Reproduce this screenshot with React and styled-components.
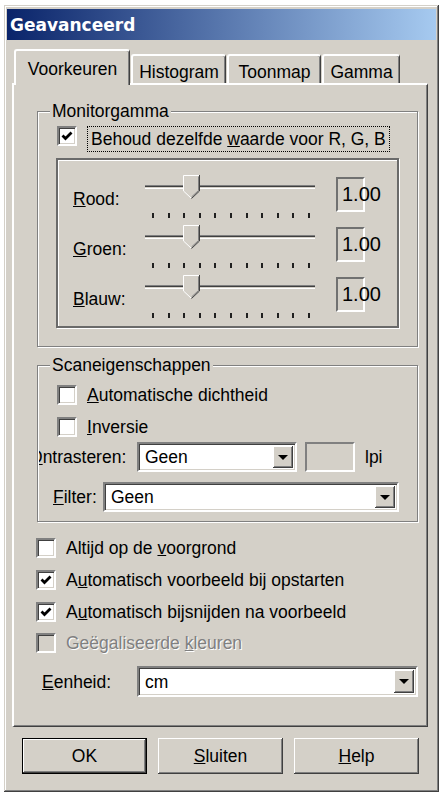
import React from 'react'
import styled, { createGlobalStyle } from 'styled-components'

const GlobalStyle = createGlobalStyle`
  html, body {
    margin: 0;
    padding: 0;
    background: #fff;
  }
  body {
    font-family: "Liberation Sans", Arial, sans-serif;
    font-size: 17.5px;
    color: #000;
  }
`

const raised = `
  box-shadow: inset -1px -1px 0 #404040, inset 1px 1px 0 #fff,
    inset -2px -2px 0 #808080, inset 2px 2px 0 #D4D0C8;
`

const sunken = `
  border-style: solid;
  border-width: 2px;
  border-color: #808080 #fff #fff #808080;
  box-shadow: inset 1px 1px 0 #404040, inset -1px -1px 0 #D4D0C8;
`

const Window = styled.div`
  box-sizing: border-box;
  width: 435px;
  height: 787px;
  margin: 5px 0 0 4px;
  padding: 4px 3px 3px 3px;
  background: #D4D0C8;
  box-shadow: inset -1px -1px 0 #404040, inset 1px 1px 0 #D4D0C8,
    inset -2px -2px 0 #808080, inset 2px 2px 0 #fff;
  display: flex;
  flex-direction: column;
`

const TitleBar = styled.div`
  height: 31px;
  display: flex;
  align-items: center;
  padding-left: 3px;
  background: linear-gradient(to right, #0A246A, #A6CAF0);
  color: #fff;
  font-family: "DejaVu Sans", Verdana, sans-serif;
  font-weight: bold;
  font-size: 17px;
`

const Body = styled.div`
  padding: 9px 8px 0 5px;
  display: flex;
  flex-direction: column;
`

const TabStrip = styled.div`
  display: flex;
  align-items: flex-end;
  height: 34px;
  padding-left: 2px;
  gap: 1px;
  position: relative;
  z-index: 1;
`

const Tab = styled.div`
  box-sizing: border-box;
  width: ${p => p.$w}px;
  height: ${p => (p.$active ? 36 : 29)}px;
  margin-bottom: ${p => (p.$active ? -2 : 0)}px;
  padding-top: ${p => (p.$active ? 8 : 6)}px;
  line-height: 20px;
  text-align: center;
  white-space: nowrap;
  background: #D4D0C8;
  border-top: 2px solid #fff;
  border-left: 2px solid #fff;
  border-right: 1px solid #404040;
  border-radius: 3px 3px 0 0;
  box-shadow: inset -1px 0 0 #808080;
`

const Panel = styled.div`
  box-sizing: border-box;
  height: 644px;
  padding: 26px 9px 0 23px;
  border-top: 2px solid #fff;
  border-left: 2px solid #fff;
  border-right: 1px solid #404040;
  border-bottom: 1px solid #404040;
  box-shadow: inset -1px -1px 0 #808080;
  display: flex;
  flex-direction: column;
`

const Group = styled.div`
  box-sizing: border-box;
  margin-top: ${p => p.$mt || 0}px;
  padding: 0 18px ${p => p.$pb}px 18px;
  border: 1px solid #808080;
  box-shadow: inset 1px 1px 0 #fff, 1px 1px 0 #fff;
  display: flex;
  flex-direction: column;
`

const Legend = styled.span`
  align-self: flex-start;
  margin: -11px 0 0 -6px;
  padding: 0 2px;
  line-height: 20px;
  background: #D4D0C8;
`

const Row = styled.div`
  display: flex;
  align-items: ${p => p.$align || 'center'};
  gap: ${p => p.$gap || 0}px;
  margin-top: ${p => p.$mt || 0}px;
  margin-left: ${p => p.$ml || 0}px;
  height: ${p => p.$h || 20}px;
`

const Box = styled.span`
  box-sizing: border-box;
  flex: none;
  width: 20px;
  height: 20px;
  background: ${p => (p.$disabled ? '#D4D0C8' : '#fff')};
  ${sunken}
  display: flex;
  align-items: center;
  justify-content: center;
`

const Text = styled.span`
  line-height: 20px;
  white-space: nowrap;
  margin-left: ${p => p.$ml || 0}px;
  color: ${p => (p.$disabled ? '#808080' : '#000')};
  text-shadow: ${p => (p.$disabled ? '1px 1px 0 #fff' : 'none')};
`

const FocusText = styled.span`
  border: 1px dotted #000;
  padding: 0 3px;
  line-height: 24px;
  white-space: nowrap;
  margin-left: -3px;
`

const GammaBox = styled.div`
  box-sizing: border-box;
  height: 170px;
  margin-top: 6px;
  padding: 12px 13px 0 15px;
  border: 2px solid #6a6a6a;
  box-shadow: inset 1px 1px 0 #fff, 1px 1px 0 #fff;
  display: flex;
  flex-direction: column;
`

const SliderRow = styled.div`
  display: grid;
  grid-template-columns: 70px 174px 48px;
  align-items: start;
  height: 50px;
`

const SliderLabel = styled.span`
  padding-top: 17px;
  line-height: 20px;
`

const Slider = styled.div`
  position: relative;
  height: 49px;
  display: flex;
  flex-direction: column;
`

const Track = styled.div`
  height: 4px;
  margin: 13px 2px 0 2px;
  background: #D4D0C8;
  box-shadow: inset 0 1px 0 #808080, inset 0 2px 0 #404040, inset 0 -1px 0 #fff;
`

const Thumb = styled.svg`
  position: absolute;
  left: 40px;
  top: 3px;
`

const Ticks = styled.div`
  display: flex;
  justify-content: space-between;
  margin-top: 24px;
  padding: 0 7px 0 9px;
`

const Tick = styled.span`
  width: 2px;
  height: 5px;
  background: #202020;
`

const ValueBox = styled.div`
  box-sizing: border-box;
  height: 35px;
  margin: 5px 0 0 19px;
  padding-left: 4px;
  border-style: solid;
  border-width: 2px;
  border-color: #707070 #fff #fff #707070;
  display: flex;
  align-items: center;
  font-size: 20px;
`

const Combo = styled.div`
  box-sizing: border-box;
  flex: none;
  width: ${p => p.$w}px;
  height: ${p => p.$h || 30}px;
  margin-left: ${p => p.$ml || 0}px;
  background: #fff;
  ${sunken}
  display: flex;
  align-items: center;
  padding: 2px;
`

const ComboText = styled.span`
  padding-left: 4px;
  line-height: 20px;
`

const DropButton = styled.span`
  margin-left: auto;
  width: 20px;
  height: 100%;
  background: #D4D0C8;
  ${raised}
  display: flex;
  align-items: center;
  justify-content: center;

  &::after {
    content: '';
    border-top: 5px solid #000;
    border-left: 5px solid transparent;
    border-right: 5px solid transparent;
  }
`

const GreyField = styled.span`
  box-sizing: border-box;
  width: 50px;
  height: 30px;
  margin-left: 8px;
  border-style: solid;
  border-width: 2px;
  border-color: #808080 #fff #fff #808080;
`

const ClipLabel = styled.span`
  width: ${p => p.$w}px;
  flex: none;
  overflow: hidden;
  white-space: nowrap;
  text-indent: ${p => p.$indent || 0}px;
  line-height: 20px;
`

const ButtonRow = styled.div`
  display: flex;
  gap: 11px;
  margin-top: 11px;
  padding-left: 10px;
`

const Button = styled.div`
  box-sizing: border-box;
  width: 125px;
  height: 36px;
  display: flex;
  align-items: center;
  justify-content: center;
  background: #D4D0C8;
  border: ${p => (p.$default ? '1px solid #000' : 'none')};
  ${raised}
`

const Check = () => (
  <svg width="12" height="12" viewBox="0 0 12 12">
    <path d="M1.5 5.5 L4.5 8.5 L10.5 2.5" stroke="#000" strokeWidth="2.8" fill="none" />
  </svg>
)

const CheckItem = ({ checked, disabled, children, mt, ml }) => (
  <Row $gap={10} $mt={mt} $ml={ml}>
    <Box $disabled={disabled}>{checked && <Check />}</Box>
    <Text $disabled={disabled}>{children}</Text>
  </Row>
)

const ThumbIcon = () => (
  <Thumb width="17" height="24" viewBox="0 0 17 24">
    <polygon points="0.5,0.5 16.5,0.5 16.5,16 8.5,23.5 0.5,16" fill="#D4D0C8" />
    <polyline points="8,23 0.5,16 0.5,0.5 16,0.5" stroke="#fff" fill="none" />
    <polyline points="16.5,0 16.5,16 8.5,23.5" stroke="#404040" fill="none" />
    <polyline points="15.5,1.5 15.5,15.5 8.5,22" stroke="#808080" fill="none" />
  </Thumb>
)

const GammaSlider = ({ label, accel }) => (
  <SliderRow>
    <SliderLabel><u>{accel}</u>{label}</SliderLabel>
    <Slider>
      <Track />
      <ThumbIcon />
      <Ticks>
        {Array.from({ length: 11 }).map((_, i) => <Tick key={i} />)}
      </Ticks>
    </Slider>
    <ValueBox>1.00</ValueBox>
  </SliderRow>
)

const App = () => (
  <>
    <GlobalStyle />
    <Window>
      <TitleBar>Geavanceerd</TitleBar>
      <Body>
        <TabStrip>
          <Tab $active $w={116}>Voorkeuren</Tab>
          <Tab $w={95}>Histogram</Tab>
          <Tab $w={94}>Toonmap</Tab>
          <Tab $w={78}>Gamma</Tab>
        </TabStrip>
        <Panel>
          <Group $pb={18}>
            <Legend>Monitorgamma</Legend>
            <Row $align="flex-start" $gap={13} $mt={5} $ml={1} $h={26}>
              <Box><Check /></Box>
              <FocusText>Behoud dezelfde <u>w</u>aarde voor R, G, B</FocusText>
            </Row>
            <GammaBox>
              <GammaSlider accel="R" label="ood:" />
              <GammaSlider accel="G" label="roen:" />
              <GammaSlider accel="B" label="lauw:" />
            </GammaBox>
          </Group>

          <Group $mt={18} $pb={9}>
            <Legend>Scaneigenschappen</Legend>
            <CheckItem mt={10} ml={1}><u>A</u>utomatische dichtheid</CheckItem>
            <CheckItem mt={12} ml={1}><u>I</u>nversie</CheckItem>
            <Row $mt={5} $ml={-17} $h={30}>
              <ClipLabel $w={98} $indent={-10}><u>O</u>ntrasteren:</ClipLabel>
              <Combo $w={160}>
                <ComboText>Geen</ComboText>
                <DropButton />
              </Combo>
              <GreyField />
              <Text $ml={10}>lpi</Text>
            </Row>
            <Row $mt={10} $ml={-3} $h={30}>
              <ClipLabel $w={50}><u>F</u>ilter:</ClipLabel>
              <Combo $w={296}>
                <ComboText>Geen</ComboText>
                <DropButton />
              </Combo>
            </Row>
          </Group>

          <CheckItem mt={16} ml={-1}>Altijd op de <u>v</u>oorgrond</CheckItem>
          <CheckItem mt={12} ml={-1} checked>A<u>u</u>tomatisch voorbeeld bij opstarten</CheckItem>
          <CheckItem mt={12} ml={-1} checked>A<u>u</u>tomatisch bijsnijden na voorbeeld</CheckItem>
          <CheckItem mt={11} ml={-1} disabled>Geëgaliseerde <u>k</u>leuren</CheckItem>

          <Row $mt={13} $ml={5} $h={31}>
            <ClipLabel $w={95}><u>E</u>enheid:</ClipLabel>
            <Combo $w={281} $h={31}>
              <ComboText>cm</ComboText>
              <DropButton />
            </Combo>
          </Row>
        </Panel>
        <ButtonRow>
          <Button $default>OK</Button>
          <Button><u>S</u>luiten</Button>
          <Button><u>H</u>elp</Button>
        </ButtonRow>
      </Body>
    </Window>
  </>
)

export default App
